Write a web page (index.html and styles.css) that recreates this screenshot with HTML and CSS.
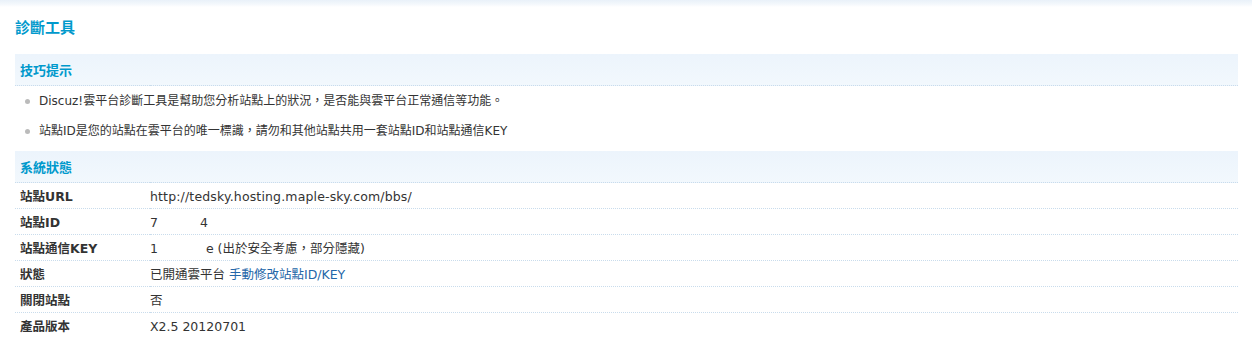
FILE: index.html
```html
<!DOCTYPE html>
<html>
<head>
  <meta charset="utf-8">
  <link rel="stylesheet" href="styles.css">
</head>
<body>
  <div class="topbar"></div>

  <div class="container">
    <h3 class="page-title">診斷工具</h3>

    <table class="tb">
      <!-- 技巧提示 -->
      <tr>
        <th class="partition" colspan="2">技巧提示</th>
      </tr>
      <tr>
        <td class="tipsblock" colspan="2">
          <ul class="tips">
            <li>Discuz!雲平台診斷工具是幫助您分析站點上的狀況，是否能與雲平台正常通信等功能。</li>
            <li>站點ID是您的站點在雲平台的唯一標識，請勿和其他站點共用一套站點ID和站點通信KEY</li>
          </ul>
        </td>
      </tr>

      <!-- 系統狀態 -->
      <tr>
        <th class="partition" colspan="2">系統狀態</th>
      </tr>
      <tr>
        <td class="label">站點URL</td>
        <td class="value url">http://tedsky.hosting.maple-sky.com/bbs/</td>
      </tr>
      <tr>
        <td class="label">站點ID</td>
        <td class="value">7<span class="masked id-mask"></span>4</td>
      </tr>
      <tr>
        <td class="label">站點通信KEY</td>
        <td class="value">1<span class="masked key-mask"></span>e (出於安全考慮，部分隱藏)</td>
      </tr>
      <tr>
        <td class="label">狀態</td>
        <td class="value">已開通雲平台 <a href="#">手動修改站點ID/KEY</a></td>
      </tr>
      <tr>
        <td class="label">關閉站點</td>
        <td class="value">否</td>
      </tr>
      <tr class="last">
        <td class="label">產品版本</td>
        <td class="value">X2.5 20120701</td>
      </tr>
    </table>
  </div>
</body>
</html>
```

FILE: styles.css
```css
body {
  margin: 0;
  padding: 0;
  font-family: "DejaVu Sans", "Noto Sans CJK TC", sans-serif;
  font-size: 12px;
  color: #333;
  background: #fff;
}

.topbar {
  height: 7px;
  background: linear-gradient(#e9f1f9 0%, #f4f8fc 60%, #fff 100%);
}

.container {
  padding: 0 14px 0 15px;
}

.page-title {
  margin: 10px 0 17px 0;
  line-height: 20px;
  height: 20px;
  font-size: 15px;
  font-weight: bold;
  color: #09c;
  font-family: "Noto Sans CJK TC", sans-serif;
}

.tb {
  width: 100%;
  border-collapse: collapse;
}

.tb td,
.tb th {
  padding: 0;
  text-align: left;
}

.partition {
  height: 31px;
  padding-left: 5px !important;
  background: linear-gradient(#ecf4fc, #f2f8fd);
  border-bottom: 1px dotted #c9dcec;
  color: #09c;
  font-weight: bold;
  font-size: 13px;
  font-family: "Noto Sans CJK TC", sans-serif;
}

.tipsblock {
  padding-bottom: 5px !important;
}

.tips {
  margin: 0;
  padding: 0;
  list-style: none;
}

.tips li {
  position: relative;
  height: 30px;
  line-height: 30px;
  padding-left: 24px;
  color: #333;
}

.tips li:before {
  content: "";
  position: absolute;
  left: 10px;
  top: 13px;
  width: 5px;
  height: 5px;
  border-radius: 50%;
  background: #bbb;
}

.label,
.value {
  height: 22px;
  line-height: 22px;
  padding-top: 3px !important;
  border-bottom: 1px dotted #c9dcec;
  font-size: 12.5px;
}

.last .label,
.last .value {
  border-bottom: none;
}

.label {
  width: 130px;
  padding-left: 5px !important;
  font-weight: bold;
  color: #333;
}

.value {
  color: #333;
}

.url {
  letter-spacing: 0.15px;
}

.masked {
  display: inline-block;
}

.id-mask {
  width: 42px;
}

.key-mask {
  width: 48px;
}

.value a {
  color: #2366a8;
  text-decoration: none;
}
```
